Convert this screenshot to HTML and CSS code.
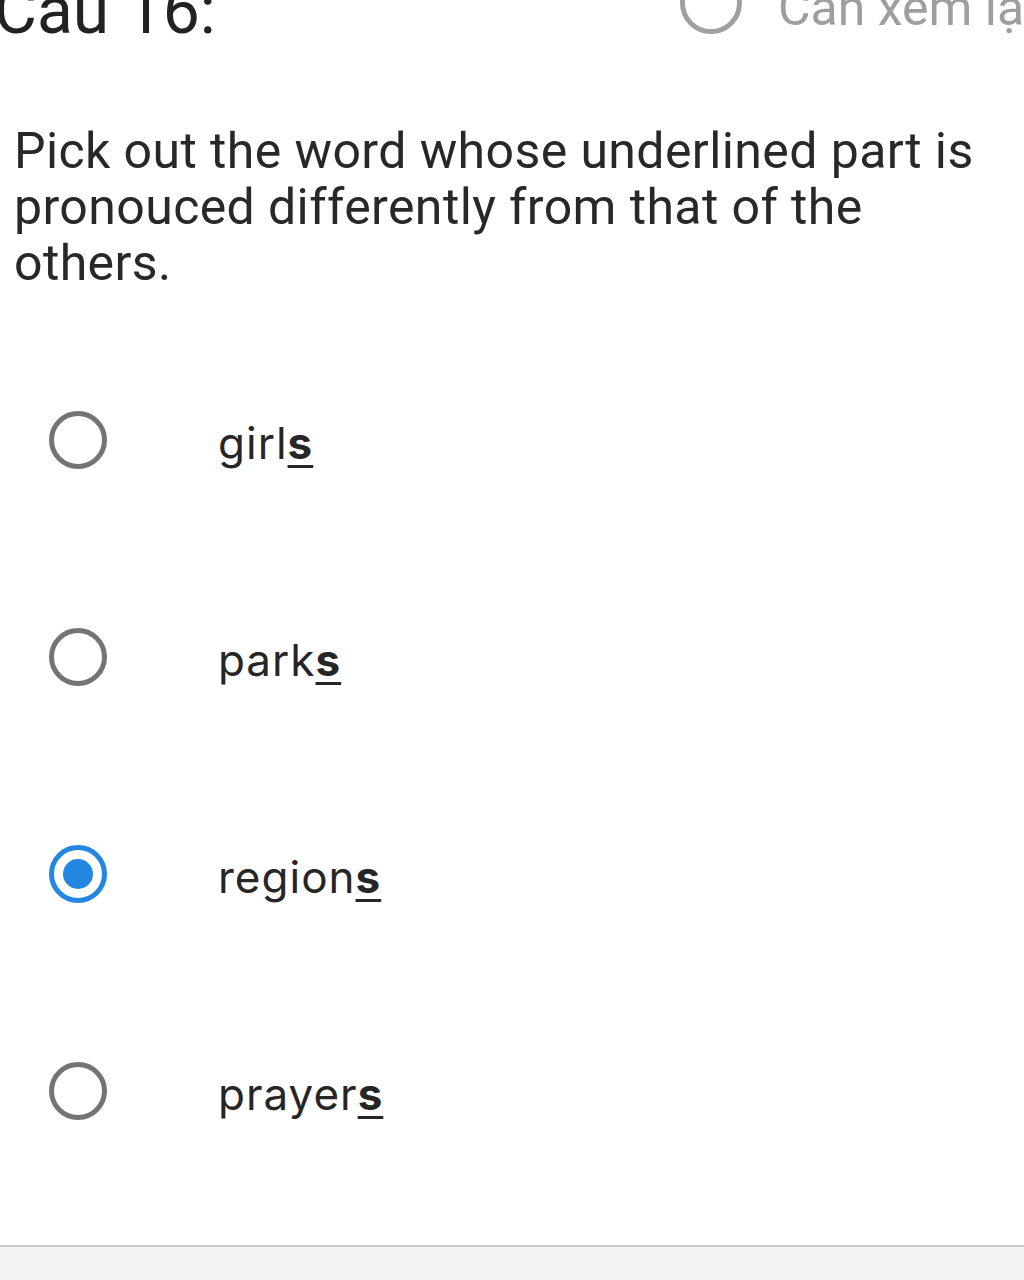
FILE: index.html
```html
<!DOCTYPE html>
<html lang="vi">
<head>
    <meta charset="UTF-8">
    <meta name="viewport" content="width=device-width, initial-scale=1.0">
    <title>Câu 16</title>
    <link rel="stylesheet" href="styles.css">
</head>
<body>

    <div class="question-card">
        <header class="question-header">
            <span class="question-number">Câu 16:</span>
            <label class="review-flag">
                <span class="radio radio-muted"></span>
                <span class="review-text">Cần xem lại</span>
            </label>
        </header>

        <p class="question-text">Pick out the word whose underlined part is pronouced differently from that of the others.</p>

        <ul class="options">
            <li class="option">
                <span class="radio"></span>
                <span class="option-text">girl<u>s</u></span>
            </li>
            <li class="option">
                <span class="radio"></span>
                <span class="option-text">park<u>s</u></span>
            </li>
            <li class="option">
                <span class="radio checked"></span>
                <span class="option-text">region<u>s</u></span>
            </li>
            <li class="option">
                <span class="radio"></span>
                <span class="option-text">prayer<u>s</u></span>
            </li>
        </ul>
    </div>

    <div class="page-bottom"></div>

</body>
</html>
```

FILE: styles.css
```css
html, body {
    margin: 0;
    padding: 0;
}

body {
    font-family: Roboto, "Liberation Sans", sans-serif;
    background-color: #fff;
    color: #222;
    overflow: hidden;
}

.question-card {
    background: #fff;
    padding-bottom: 46px;
    border-bottom: 2px solid #c9c9cb;
}

/* header is scrolled partly out of view */
.question-header {
    display: grid;
    grid-template-columns: 686px 1fr;
    align-items: start;
    margin-top: -24px;
    margin-left: -6px;
    height: 68px;
    white-space: nowrap;
    overflow: hidden;
}

.question-number {
    font-size: 66px;
    line-height: 70px;
    color: #222;
}

.review-flag {
    display: flex;
    align-items: center;
    gap: 36px;
    margin-top: -4px;
    color: #9e9e9e;
}

.review-text {
    font-size: 50px;
    line-height: 70px;
}

.radio {
    flex: none;
    display: flex;
    align-items: center;
    justify-content: center;
    width: 58px;
    height: 58px;
    box-sizing: border-box;
    border: 5px solid #747474;
    border-radius: 50%;
}

.radio-muted {
    width: 62px;
    height: 62px;
    margin-bottom: 10px;
    border-color: #a0a0a0;
}

.radio.checked {
    border-color: #2386e0;
}

.radio.checked::after {
    content: "";
    width: 30px;
    height: 30px;
    border-radius: 50%;
    background: #2386e0;
}

.question-text {
    margin: 79px 0 0;
    padding: 0 24px 0 14px;
    font-size: 50px;
    line-height: 56px;
    letter-spacing: 0.4px;
    color: #282828;
}

.options {
    list-style: none;
    margin: 40px 0 0;
    padding: 0;
}

.option {
    display: flex;
    align-items: center;
    height: 217px;
    padding-left: 49px;
}

.option-text {
    margin-left: 111px;
    padding-top: 6px;
    font-family: Inter, Roboto, sans-serif;
    font-size: 44px;
    letter-spacing: 1px;
    color: #262626;
}

.option-text u {
    font-weight: 700;
    text-decoration-thickness: 3px;
    text-underline-offset: 6px;
}

.page-bottom {
    height: 40px;
    background: #f2f3f5;
}
```
